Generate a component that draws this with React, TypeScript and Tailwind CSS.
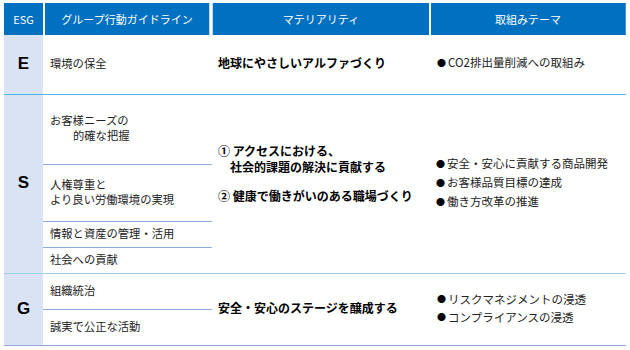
import React from "react";

const font = { fontFamily: '"Noto Sans CJK JP", "Noto Sans", sans-serif' };

function Bullet({ children }: { children: React.ReactNode }) {
  return (
    <div className="flex items-center">
      <span className="text-[9px] mr-[2px] text-black">●</span>
      <span>{children}</span>
    </div>
  );
}

export default function App() {
  return (
    <div className="w-[630px] h-[350px] bg-white pl-[4px] pt-[3px] text-[#222]" style={font}>
      {/* Header */}
      <div className="flex h-[32px] w-[622px] text-white text-[11px]">
        <div className="w-[39px] bg-[#0070C0] flex items-center justify-center">ESG</div>
        <div className="w-[2px] bg-white" />
        <div className="w-[164px] bg-[#0070C0] flex items-center justify-center">グループ行動ガイドライン</div>
        <div className="w-[4px] bg-white border-x border-[#C9D6F0]" />
        <div className="w-[216px] bg-[#0070C0] flex items-center justify-center">マテリアリティ</div>
        <div className="w-[2px] bg-white" />
        <div className="w-[194px] bg-[#0070C0] flex items-center justify-center">取組みテーマ</div>
        <div className="w-[1px] bg-[#4A90D9]" />
      </div>

      {/* E row */}
      <div className="grid grid-cols-[39px_169px_218px_196px] w-[622px] h-[60px] border-b border-[#4DB8E4]">
        <div className="bg-[#DAE3F3] flex items-center justify-center pb-[2px] text-[17px] font-bold text-black" style={{ fontFamily: '"Liberation Sans", sans-serif' }}>E</div>
        <div className="flex items-center pl-[7px] pb-[3px] text-[11.3px]">環境の保全</div>
        <div className="flex items-center pl-[6px] pb-[3px] text-[12px] font-bold text-black">地球にやさしいアルファづくり</div>
        <div className="flex items-center pl-[7px] pb-[3px] text-[11.5px]"><Bullet>CO2排出量削減への取組み</Bullet></div>
      </div>

      {/* S row */}
      <div className="grid grid-cols-[39px_169px_218px_196px] w-[622px] h-[179px] border-b border-[#9DD0EA]">
        <div className="bg-[#DAE3F3] flex items-center justify-center pb-[2px] text-[17px] font-bold text-black" style={{ fontFamily: '"Liberation Sans", sans-serif' }}>S</div>
        <div className="flex flex-col text-[11.3px]">
          <div className="h-[70px] border-b border-[#8FAADC] flex flex-col justify-center pl-[7px] pb-[3px] leading-[15px]">
            <div>お客様ニーズの</div>
            <div className="pl-[23px]">的確な把握</div>
          </div>
          <div className="h-[57px] border-b border-[#8FAADC] flex flex-col justify-center pl-[7px] pb-[3px] leading-[15px]">
            <div>人権尊重と</div>
            <div>より良い労働環境の実現</div>
          </div>
          <div className="h-[26px] border-b border-[#8FAADC] flex items-center pl-[7px] pb-[2px]">情報と資産の管理・活用</div>
          <div className="h-[25px] flex items-center pl-[7px] pb-[2px]">社会への貢献</div>
        </div>
        <div className="flex flex-col pt-[48px] pl-[6px] text-[12px] font-bold text-black leading-[16px]">
          <div>① アクセスにおける、</div>
          <div className="pl-[12px]">社会的課題の解決に貢献する</div>
          <div className="mt-[13px]">② 健康で働きがいのある職場づくり</div>
        </div>
        <div className="flex flex-col justify-center pl-[6px] pb-[3px] text-[11.5px] leading-[19px]">
          <Bullet>安全・安心に貢献する商品開発</Bullet>
          <Bullet>お客様品質目標の達成</Bullet>
          <Bullet>働き方改革の推進</Bullet>
        </div>
      </div>

      {/* G row */}
      <div className="grid grid-cols-[39px_169px_218px_196px] w-[622px] h-[72px] border-b border-[#8FAADC]">
        <div className="bg-[#DAE3F3] flex items-center justify-center pb-[2px] text-[17px] font-bold text-black" style={{ fontFamily: '"Liberation Sans", sans-serif' }}>G</div>
        <div className="flex flex-col text-[11.3px]">
          <div className="h-[36px] border-b border-[#8FAADC] flex items-center pl-[7px] pb-[2px]">組織統治</div>
          <div className="h-[35px] flex items-center pl-[7px] pb-[2px]">誠実で公正な活動</div>
        </div>
        <div className="flex items-center pl-[6px] pb-[3px] text-[12px] font-bold text-black">安全・安心のステージを醸成する</div>
        <div className="flex flex-col justify-center pl-[7px] pb-[3px] text-[11.5px] leading-[18px]">
          <Bullet>リスクマネジメントの浸透</Bullet>
          <Bullet>コンプライアンスの浸透</Bullet>
        </div>
      </div>
    </div>
  );
}
